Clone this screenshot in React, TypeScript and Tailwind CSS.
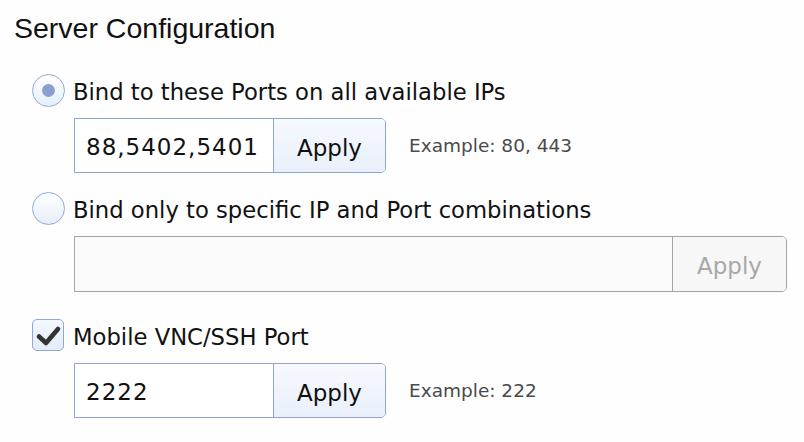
import React from "react";

const label = "font-['DejaVu_Sans',sans-serif] text-[22.7px] leading-[33px] text-[#111]";
const fieldText = "font-['DejaVu_Sans',sans-serif] text-[23px] tracking-[1px] text-[#111]";
const hint = "font-['DejaVu_Sans',sans-serif] text-[18.5px] text-[#4a4a4a]";

function Radio({ checked }: { checked?: boolean }) {
  return (
    <span className="flex h-[33px] w-[33px] shrink-0 items-center justify-center rounded-full border border-[#8ea8d8] bg-gradient-to-b from-[#ffffff] to-[#e6eefa]">
      {checked && <span className="h-[13px] w-[13px] rounded-full bg-[#8b9fd0]" />}
    </span>
  );
}

function Checkbox() {
  return (
    <span className="flex h-[32px] w-[32px] shrink-0 items-center justify-center rounded-[5px] border border-[#8ea8d8] bg-gradient-to-b from-[#f4f8fe] to-[#e3ecf9]">
      <svg width="24" height="22" viewBox="0 0 24 22" fill="none" className="overflow-visible">
        <path d="M3 12.5 L10 19 L22 5" stroke="#333" strokeWidth="4.6" strokeLinecap="round" strokeLinejoin="round" />
      </svg>
    </span>
  );
}

function Field({ value, hintText }: { value: string; hintText: string }) {
  return (
    <div className="ml-[74px] flex items-center">
      <div className="flex h-[55px] w-[312px] overflow-hidden rounded-r-[5px] border border-[#8ea5cc]">
        <div className={`flex w-[198px] items-center bg-white pl-[11px] pt-[3px] ${fieldText}`}>{value}</div>
        <button
          type="button"
          className="flex flex-1 items-center justify-center border-l border-[#8ea5cc] bg-gradient-to-b from-[#f6f9fe] to-[#e9f0fb] pt-[5px] font-['DejaVu_Sans',sans-serif] text-[23px] text-[#111]"
        >
          Apply
        </button>
      </div>
      <span className={`ml-[23px] ${hint}`}>{hintText}</span>
    </div>
  );
}

export default function App() {
  return (
    <div className="h-[442px] w-[804px] overflow-hidden bg-[#fefefe]">
      <h1 className="pl-[14px] pt-[14px] font-['Liberation_Sans',Arial,sans-serif] text-[28.5px] leading-[28px] font-normal text-[#111]">
        Server Configuration
      </h1>

      <div className="mt-[32px] flex h-[33px] items-center pl-[32px]">
        <Radio checked />
        <span className={`ml-[8px] pt-[3px] ${label}`}>Bind to these Ports on all available IPs</span>
      </div>
      <div className="mt-[11px]">
        <Field value="88,5402,5401" hintText="Example: 80, 443" />
      </div>

      <div className="mt-[19px] flex h-[33px] items-center pl-[32px]">
        <Radio />
        <span className={`ml-[8px] pt-[3px] ${label}`}>Bind only to specific IP and Port combinations</span>
      </div>
      <div className="ml-[74px] mt-[11px] flex h-[56px] w-[713px] overflow-hidden rounded-r-[5px] border border-[#a4a4a4] bg-[#fafafa]">
        <div className="flex-1" />
        <button
          type="button"
          className="flex w-[114px] items-center justify-center border-l border-[#a4a4a4] bg-[#f7f7f7] pt-[5px] font-['DejaVu_Sans',sans-serif] text-[23px] text-[#a8a8a8]"
        >
          Apply
        </button>
      </div>

      <div className="mt-[27px] flex h-[32px] items-center pl-[32px]">
        <Checkbox />
        <span className={`ml-[9px] pt-[4px] ${label}`}>Mobile VNC/SSH Port</span>
      </div>
      <div className="mt-[12px]">
        <Field value="2222" hintText="Example: 222" />
      </div>
    </div>
  );
}
